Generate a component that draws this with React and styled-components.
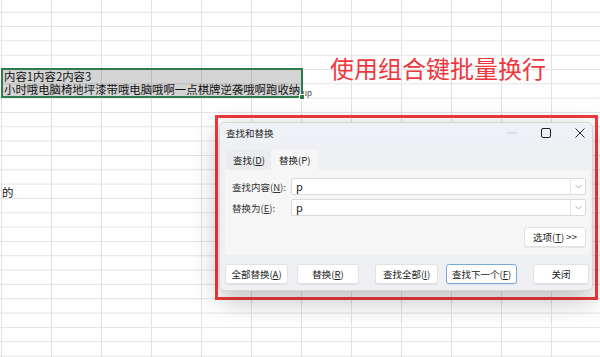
import React from "react";
import styled, { createGlobalStyle } from "styled-components";

const GlobalStyle = createGlobalStyle`
  html, body {
    margin: 0;
    padding: 0;
    background: #ffffff;
  }
  body {
    font-family: "Noto Sans CJK SC", "Noto Sans", sans-serif;
  }
`;

const FONT = `"Noto Sans CJK SC", "Noto Sans", sans-serif`;

const Sheet = styled.div`
  position: relative;
  width: 600px;
  height: 357px;
  overflow: hidden;
  padding-top: 68px;
  box-sizing: border-box;
  background-color: #ffffff;
  background-image: linear-gradient(to right, #e2e2e2 1px, transparent 1px),
    linear-gradient(to bottom, #e2e2e2 1px, transparent 1px);
  background-size: 50px 100%, 100% 14.333px;
  background-position: 1px 0, 0 11.7px;
`;

const Selection = styled.div`
  position: relative;
  margin-left: 1px;
  width: 302px;
  height: 30px;
  box-sizing: border-box;
  border: 2px solid #2e7b4e;
  background: rgba(0, 0, 0, 0.17);
`;

const Cell = styled.div`
  height: 13px;
  line-height: 13px;
  padding-left: ${(p) => p.$indent || 1}px;
  margin-top: ${(p) => p.$top || 0}px;
  font-family: ${FONT};
  font-size: 11.4px;
  color: #111;
  white-space: nowrap;
`;

const Tail = styled.span`
  font-size: 8px;
  color: #444;
  margin-left: 2px;
  vertical-align: -2px;
`;

const Handle = styled.div`
  position: absolute;
  right: -4px;
  bottom: -4px;
  width: 4px;
  height: 4px;
  background: #2e7b4e;
  border: 1px solid #ffffff;
`;

const Title = styled.div`
  position: absolute;
  left: 330px;
  top: 56px;
  font-family: ${FONT};
  font-size: 24px;
  line-height: 24px;
  color: #ee383e;
  white-space: nowrap;
`;

const Frame = styled.div`
  position: absolute;
  left: 215px;
  top: 115px;
  border: 3px solid #f03a3c;
  padding: 4px 2px 6px 1px;
`;

const Dialog = styled.div`
  width: 374px;
  height: 169px;
  box-sizing: border-box;
  border: 1px solid #d4d6da;
  border-radius: 6px;
  background: #eef0f3;
  box-shadow: 0 8px 28px rgba(0, 0, 0, 0.28);
  overflow: hidden;
  font-family: ${FONT};
  font-size: 9.5px;
  color: #222;
  display: flex;
  flex-direction: column;
`;

const TitleBar = styled.div`
  height: 20px;
  display: flex;
  align-items: center;
  gap: 24px;
  padding: 0 7px 0 6px;
  background: #eef1f6;
`;

const TitleText = styled.div`
  flex: 1;
  font-size: 9.5px;
  color: #1e1e1e;
`;

const WinButton = styled.div`
  width: 10px;
  height: 20px;
  display: flex;
  align-items: center;
  justify-content: center;
  svg {
    display: block;
  }
`;

const TabStrip = styled.div`
  display: flex;
  padding: 7px 0 0 7px;
  height: 27px;
  box-sizing: border-box;
`;

const Tab = styled.div`
  height: 20px;
  padding: 0 ${(p) => (p.$active ? 8 : 6)}px;
  display: flex;
  align-items: center;
  background: ${(p) => (p.$active ? "#f6f6f6" : "#eaecef")};
  color: #222;
`;

const Panel = styled.div`
  margin: 0 2px 0 5px;
  padding: 8px 4px 8px 7px;
  background: #f6f6f6;
  display: flex;
  flex-direction: column;
  gap: 4px;
`;

const FieldRow = styled.div`
  display: flex;
  align-items: center;
  height: 17px;
`;

const Label = styled.div`
  width: 59px;
  color: #333;
`;

const Combo = styled.div`
  flex: 1;
  height: 17px;
  box-sizing: border-box;
  background: #ffffff;
  border: 1px solid #dadada;
  border-radius: 2px;
  display: flex;
`;

const ComboValue = styled.div`
  flex: 1;
  padding-left: 4px;
  font-size: 11px;
  line-height: 15px;
  color: #222;
`;

const ComboArrow = styled.div`
  width: 14px;
  border-left: 1px solid #e6e6e6;
  display: flex;
  align-items: center;
  justify-content: center;
`;

const OptionsRow = styled.div`
  display: flex;
  justify-content: flex-end;
  margin-top: 7px;
`;

const Button = styled.div`
  width: ${(p) => p.$w}px;
  height: 20px;
  margin-left: ${(p) => p.$gap || 0}px;
  box-sizing: border-box;
  display: flex;
  align-items: center;
  justify-content: center;
  background: #ffffff;
  border: 1px solid ${(p) => (p.$focus ? "#7aa9db" : "#e2e2e2")};
  border-radius: 3px;
  box-shadow: 0 1px 0 rgba(0, 0, 0, 0.06);
  color: #222;
  white-space: nowrap;
`;

const ButtonBar = styled.div`
  display: flex;
  padding: 9px 0 0 5px;
`;

function Chevron() {
  return (
    <svg width="7" height="5" viewBox="0 0 7 5">
      <path d="M0.5 1 L3.5 4 L6.5 1" fill="none" stroke="#a8a8a8" strokeWidth="0.9" />
    </svg>
  );
}

function Combobox({ value }) {
  return (
    <Combo>
      <ComboValue>{value}</ComboValue>
      <ComboArrow>
        <Chevron />
      </ComboArrow>
    </Combo>
  );
}

export default function App() {
  return (
    <>
      <GlobalStyle />
      <Sheet>
        <Selection>
          <Cell>内容1内容2内容3</Cell>
          <Cell>
            小时哦电脑椅地坪漆带哦电脑哦啊一点棋牌逆袭哦啊跑收纳<Tail>up</Tail>
          </Cell>
          <Handle />
        </Selection>
        <Cell $top={88} $indent={2}>
          的
        </Cell>

        <Title>使用组合键批量换行</Title>

        <Frame>
          <Dialog>
            <TitleBar>
              <TitleText>查找和替换</TitleText>
              <WinButton>
                <svg width="10" height="2" viewBox="0 0 10 2">
                  <path d="M0 1 H10" stroke="#c4c6ca" strokeWidth="1" />
                </svg>
              </WinButton>
              <WinButton>
                <svg width="10" height="10" viewBox="0 0 10 10">
                  <rect x="0.5" y="0.5" width="9" height="9" rx="1.5" fill="none" stroke="#222" strokeWidth="1" />
                </svg>
              </WinButton>
              <WinButton>
                <svg width="10" height="10" viewBox="0 0 10 10">
                  <path d="M0.5 0.5 L9.5 9.5 M9.5 0.5 L0.5 9.5" stroke="#222" strokeWidth="1" />
                </svg>
              </WinButton>
            </TitleBar>

            <TabStrip>
              <Tab>
                查找(<u>D</u>)
              </Tab>
              <Tab $active>替换(P)</Tab>
            </TabStrip>

            <Panel>
              <FieldRow>
                <Label>
                  查找内容(<u>N</u>):
                </Label>
                <Combobox value="p" />
              </FieldRow>
              <FieldRow>
                <Label>
                  替换为(<u>E</u>):
                </Label>
                <Combobox value="p" />
              </FieldRow>
              <OptionsRow>
                <Button $w={62}>选项(<u>T</u>) &gt;&gt;</Button>
              </OptionsRow>
            </Panel>

            <ButtonBar>
              <Button $w={63}>全部替换(<u>A</u>)</Button>
              <Button $w={62} $gap={9}>
                替换(<u>R</u>)
              </Button>
              <Button $w={63} $gap={16}>
                查找全部(<u>I</u>)
              </Button>
              <Button $w={71} $gap={8} $focus>
                查找下一个(<u>F</u>)
              </Button>
              <Button $w={56} $gap={16}>
                关闭
              </Button>
            </ButtonBar>
          </Dialog>
        </Frame>
      </Sheet>
    </>
  );
}
